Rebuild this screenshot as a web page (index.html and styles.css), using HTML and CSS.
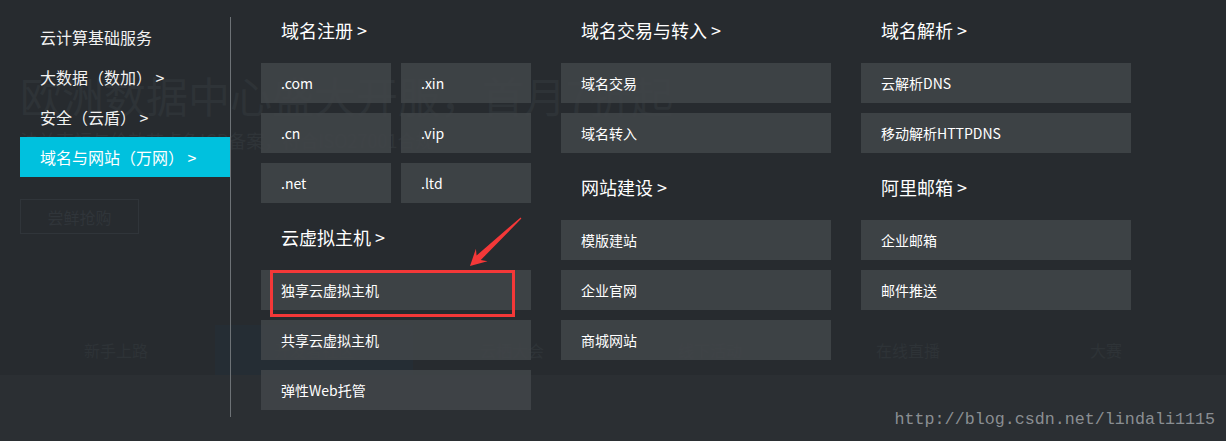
FILE: index.html
```html
<!DOCTYPE html>
<html lang="zh-CN">
<head>
<meta charset="utf-8">
<title>域名与网站（万网）</title>
<link rel="stylesheet" href="styles.css">
</head>
<body>
<div class="page">
  <div class="site">
    <section class="hero">
      <h1 class="hero-title">欧洲数据中心盛大开服，首月7折起</h1>
      <p class="hero-sub">法兰克福与伦敦节点免ICP备案，符合ISO27001合规</p>
      <span class="hero-btn">尝鲜抢购</span>
    </section>
    <nav class="tabs">
      <span class="tab">新手上路</span>
      <span class="tab tab-active">开发者社区</span>
      <span class="tab">云栖大会</span>
      <span class="tab">线下活动</span>
      <span class="tab">在线直播</span>
      <span class="tab">大赛</span>
    </nav>
    <div class="band"></div>
  </div>

  <div class="mega">
    <ul class="side-nav">
      <li class="side-item">云计算基础服务</li>
      <li class="side-item">大数据（数加） &gt;</li>
      <li class="side-item">安全（云盾） &gt;</li>
      <li class="side-item side-active">域名与网站（万网） &gt;</li>
    </ul>

    <div class="columns">
      <div class="col">
        <div class="group-title">域名注册 &gt;</div>
        <div class="grid2">
          <div class="item">.com</div>
          <div class="item">.xin</div>
          <div class="item">.cn</div>
          <div class="item">.vip</div>
          <div class="item">.net</div>
          <div class="item">.ltd</div>
        </div>
        <div class="group-title">云虚拟主机 &gt;</div>
        <div class="item">独享云虚拟主机</div>
        <div class="item">共享云虚拟主机</div>
        <div class="item">弹性Web托管</div>
      </div>

      <div class="col">
        <div class="group-title">域名交易与转入 &gt;</div>
        <div class="item">域名交易</div>
        <div class="item">域名转入</div>
        <div class="group-title">网站建设 &gt;</div>
        <div class="item">模版建站</div>
        <div class="item">企业官网</div>
        <div class="item">商城网站</div>
      </div>

      <div class="col">
        <div class="group-title">域名解析 &gt;</div>
        <div class="item">云解析DNS</div>
        <div class="item">移动解析HTTPDNS</div>
        <div class="group-title">阿里邮箱 &gt;</div>
        <div class="item">企业邮箱</div>
        <div class="item">邮件推送</div>
      </div>
    </div>

    <div class="mark-box"></div>
    <svg class="mark-arrow" width="70" height="65" viewBox="0 0 70 65">
      <polygon points="10,56 15.9,38.8 16.6,45.6 60.6,7.4 61.4,8.6 20.8,50 27.5,51.2" fill="#f43838"/>
    </svg>
  </div>

  <div class="watermark">http://blog.csdn.net/lindali1115</div>
</div>
</body>
</html>
```

FILE: styles.css
```css
* {
  box-sizing: border-box;
}

html, body {
  margin: 0;
  padding: 0;
}

body {
  background: #272b2f;
  font-family: "Noto Sans CJK SC", "Noto Sans", sans-serif;
  color: #fff;
}

.page {
  position: relative;
  width: 1226px;
  height: 441px;
  overflow: hidden;
  background: #272b2f;
}

/* ---------- underlying page (faint) ---------- */
.site {
  display: flex;
  flex-direction: column;
}

.hero {
  height: 325px;
  padding: 71px 0 0 20px;
  display: flex;
  flex-direction: column;
  align-items: flex-start;
}

.hero-title {
  margin: 0;
  font-size: 42px;
  line-height: 48px;
  font-weight: 400;
  color: #2e3337;
  white-space: nowrap;
}

.hero-sub {
  margin: 9px 0 0;
  font-size: 18px;
  line-height: 24px;
  color: #2f3438;
  white-space: nowrap;
}

.hero-btn {
  margin-top: 47px;
  width: 119px;
  height: 35px;
  border: 1px solid #30353a;
  display: flex;
  align-items: center;
  justify-content: center;
  font-size: 16px;
  color: #30353a;
}

.tabs {
  height: 50px;
  display: flex;
  padding-left: 17px;
}

.tab {
  width: 198px;
  display: flex;
  align-items: center;
  justify-content: center;
  font-size: 16px;
  color: #2e3337;
}

.tab-active {
  background: #252d34;
}

.band {
  height: 66px;
  background: #2b2f33;
}

/* ---------- mega menu overlay ---------- */
.mega {
  position: absolute;
  top: 0;
  left: 0;
  width: 100%;
  height: 100%;
  display: flex;
  align-items: flex-start;
}

.side-nav {
  list-style: none;
  margin: 17px 0 0 20px;
  padding: 0;
  width: 211px;
  height: 400px;
  border-right: 1px solid #6d7276;
}

.side-item {
  height: 40px;
  line-height: 40px;
  padding-left: 20px;
  font-size: 16px;
  color: #f2f2f2;
  white-space: nowrap;
}

.side-active {
  background: #00c1de;
  color: #fff;
}

.columns {
  display: flex;
  gap: 30px;
  margin-left: 30px;
  padding-top: 6px;
}

.col {
  width: 270px;
}

.group-title {
  height: 48px;
  line-height: 48px;
  padding-left: 20px;
  margin-bottom: 9px;
  font-size: 18px;
  color: #fff;
  white-space: nowrap;
}

.grid2 {
  display: grid;
  grid-template-columns: 130px 130px;
  column-gap: 10px;
}

.item {
  height: 40px;
  line-height: 40px;
  padding-left: 20px;
  margin-bottom: 10px;
  font-size: 14px;
  color: #fff;
  background: rgba(64, 69, 72, 0.9);
  white-space: nowrap;
}

/* ---------- annotation ---------- */
.mark-box {
  position: absolute;
  left: 270px;
  top: 270px;
  width: 245px;
  height: 47px;
  border: 3px solid #f43838;
}

.mark-arrow {
  position: absolute;
  left: 460px;
  top: 210px;
}

.watermark {
  position: absolute;
  right: 11px;
  top: 410px;
  font-family: "Liberation Mono", monospace;
  font-size: 16.7px;
  line-height: 20px;
  color: #8a8e92;
  white-space: nowrap;
}
```
